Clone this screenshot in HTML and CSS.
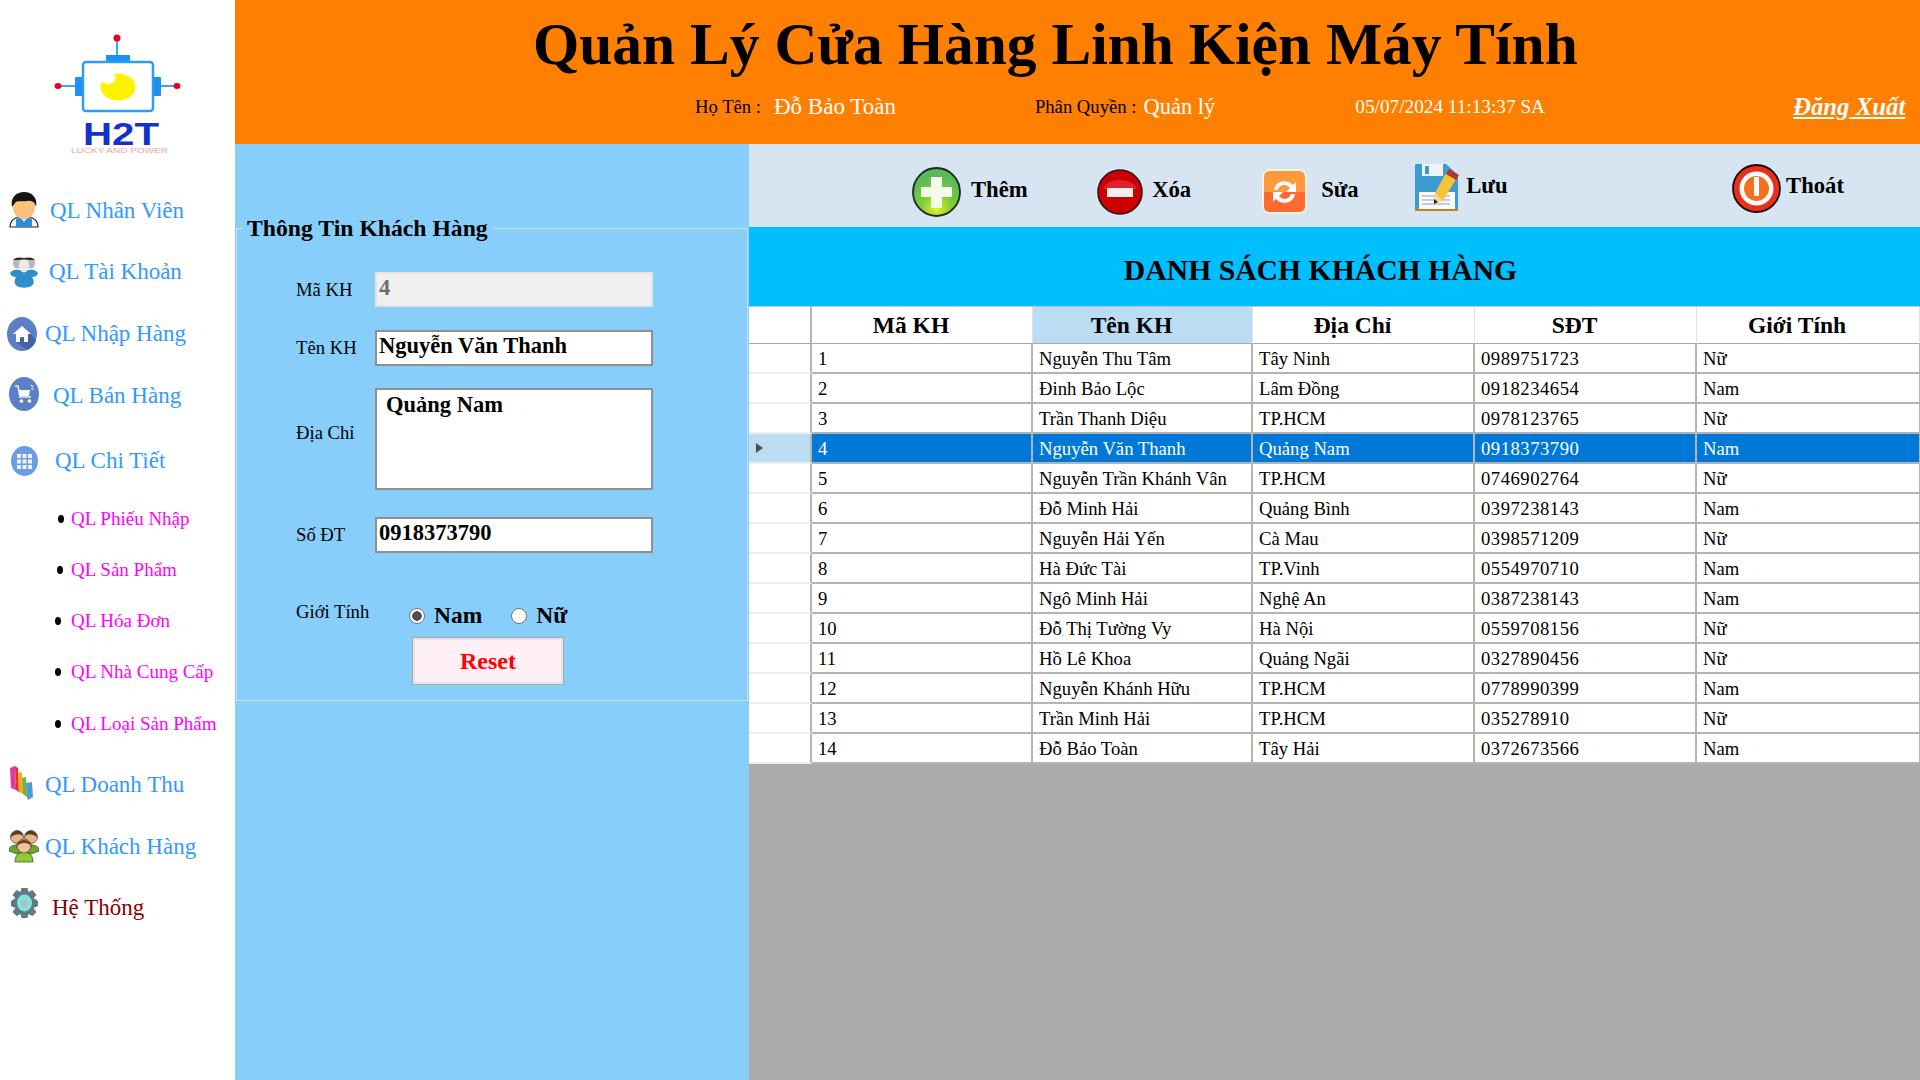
FILE: index.html
```html
<!DOCTYPE html>
<html lang="vi">
<head>
    <meta charset="UTF-8">
    <title>Quản Lý Cửa Hàng Linh Kiện Máy Tính</title>
    <link rel="stylesheet" href="styles.css">
</head>
<body>
<div class="app">
    <aside class="sidebar">
        <svg class="logo" width="235" height="165" viewBox="0 0 235 165">
            <path d="M117 38V56M58 86H76M160 86H177" stroke="#3ea6f0" stroke-width="2" fill="none"/>
            <circle cx="117" cy="38" r="3.5" fill="#e8001c"/>
            <ellipse cx="58" cy="86" rx="3.5" ry="3" fill="#e8001c"/>
            <ellipse cx="177" cy="86" rx="3.5" ry="3" fill="#e8001c"/>
            <rect x="106" y="55" width="24" height="7" fill="#1e90f0"/>
            <rect x="75" y="77" width="9" height="19" rx="1" fill="#1e90f0"/>
            <rect x="152" y="77" width="9" height="19" rx="1" fill="#1e90f0"/>
            <rect x="83" y="62" width="70" height="49" rx="3" fill="#fff" stroke="#2a9df4" stroke-width="2.5"/>
            <ellipse cx="118" cy="87" rx="17.5" ry="13.5" fill="#fff200"/>
            <ellipse cx="108" cy="78" rx="7.5" ry="6" fill="#fff"/>
            <text class="logo-name" x="83" y="145" textLength="76" lengthAdjust="spacingAndGlyphs">H2T</text>
            <text class="logo-tag" x="71" y="152.5" textLength="97" lengthAdjust="spacingAndGlyphs">LUCKY AND POWER</text>
        </svg>
        <nav class="nav">
            <a class="nav-link nav-staff" href="#">
                <svg width="30" height="36" viewBox="0 0 30 36">
                    <path d="M1 35C1 28 6 26 11 24H19C24 26 29 28 29 35Z" fill="#f4f4f4" stroke="#222" stroke-width="1.2"/>
                    <path d="M7 35V27L11 25L15 30L19 25L23 27V35Z" fill="#2a8fd8"/>
                    <ellipse cx="15" cy="15" rx="11" ry="12" fill="#fcc07c"/>
                    <path d="M3 15C1 5 8 0 15 0C23 0 29 6 27 15C26 10 23 8 18 9C13 10 8 8 6 11C5 12 4 14 3 15Z" fill="#141414"/>
                </svg>
                <span>QL Nhân Viên</span>
            </a>
            <a class="nav-link nav-account" href="#">
                <svg width="28" height="31" viewBox="0 0 28 31">
                    <path d="M0 16C2 13 5 12 9 13H19C23 12 26 13 28 16C27 19 25 20 22 20C25 24 24 29 19 30C15 31 10 31 7 29C4 27 4 23 6 20C3 20 1 19 0 16Z" fill="#2f8fcc"/>
                    <ellipse cx="7" cy="6" rx="4" ry="5.500" fill="#b9b9b9"/>
                    <ellipse cx="21" cy="6" rx="4" ry="5.500" fill="#b9b9b9"/>
                    <ellipse cx="14" cy="8" rx="5" ry="7.500" fill="#ececec"/>
                    <path d="M3 3C6 0 10 0 14 1C18 0 22 0 25 3C22 3 17 3 14 2.500C11 3 6 3 3 3Z" fill="#33291f"/>
                </svg>
                <span>QL Tài Khoản</span>
            </a>
            <a class="nav-link nav-import" href="#">
                <svg width="30" height="34" viewBox="0 0 30 34">
                    <ellipse cx="15" cy="17" rx="15" ry="17" fill="#5c80c6"/>
                    <path d="M9 25L20 33C25 31 28 27 29 23L22 15Z" fill="#46639f"/>
                    <path d="M15 9L24 17H21V25H17V20H13V25H9V17H6Z" fill="#fff"/>
                </svg>
                <span>QL Nhập Hàng</span>
            </a>
            <a class="nav-link nav-sale" href="#">
                <svg width="30" height="34" viewBox="0 0 30 34">
                    <ellipse cx="15" cy="17" rx="15" ry="17" fill="#5c80c6"/>
                    <path d="M6 9H9L11 20H22" fill="none" stroke="#e8eef8" stroke-width="1.6"/>
                    <path d="M10 13H21L20 19H11Z" fill="#fff"/>
                    <path d="M22 8L24 10M25 12H22" stroke="#e8eef8" stroke-width="1.200"/>
                    <circle cx="12.5" cy="24" r="1.8" fill="#fff"/>
                    <circle cx="20.5" cy="24" r="1.8" fill="#fff"/>
                </svg>
                <span>QL Bán Hàng</span>
            </a>
            <a class="nav-link nav-detail" href="#">
                <svg width="27" height="30" viewBox="0 0 27 30">
                    <ellipse cx="13.5" cy="15" rx="13.5" ry="15" fill="#6b9ce8"/>
                    <path d="M6 8h4v4H6zM11.500 8h4v4h-4zM17 8h4v4h-4zM6 13.500h4v4H6zM11.500 13.500h4v4h-4zM17 13.500h4v4h-4zM6 19h4v4H6zM11.500 19h4v4h-4zM17 19h4v4h-4z" fill="#f2f6fd"/>
                </svg>
                <span>QL Chi Tiết</span>
            </a>
            <ul class="subnav">
                <li class="sub-a"><a href="#">QL Phiếu Nhập</a></li>
                <li class="sub-b"><a href="#">QL Sản Phẩm</a></li>
                <li class="sub-c"><a href="#">QL Hóa Đơn</a></li>
                <li class="sub-c"><a href="#">QL Nhà Cung Cấp</a></li>
                <li class="sub-c"><a href="#">QL Loại Sản Phẩm</a></li>
            </ul>
            <a class="nav-link nav-revenue" href="#">
                <svg width="23" height="34" viewBox="0 0 23 34">
                    <path d="M0 2L5 0L6 24L1 22Z" fill="#e23a9c"/>
                    <path d="M5 0L8 2L9 26L6 24Z" fill="#e8302a"/>
                    <path d="M8 7L12 6L13 28L9 26Z" fill="#f8a81c"/>
                    <path d="M12 12L16 11L17 31L13 28Z" fill="#6cb83a"/>
                    <path d="M16 17L22 16L23 31L18 34L17 31Z" fill="#4f9ad0"/>
                </svg>
                <span>QL Doanh Thu</span>
            </a>
            <a class="nav-link nav-customer" href="#">
                <svg width="30" height="34" viewBox="0 0 30 34">
                    <path d="M0 22C0 17 4 16 8 16C12 16 15 18 15 23L8 25Z" fill="#6aa82c" stroke="#222" stroke-width=".6"/>
                    <path d="M30 22C30 17 26 16 22 16C18 16 15 18 15 23L22 25Z" fill="#6aa82c" stroke="#222" stroke-width=".6"/>
                    <circle cx="8" cy="8" r="6.500" fill="#e5b48a" stroke="#222" stroke-width=".6"/>
                    <circle cx="22" cy="8" r="6.500" fill="#e5b48a" stroke="#222" stroke-width=".6"/>
                    <path d="M2 8C2 1 13 -1 14 7C10 4 6 5 2 8ZM16 7C17 -1 28 1 28 8C24 5 20 4 16 7Z" fill="#5a3a1c"/>
                    <path d="M6 33C6 26 10 23 15 23C20 23 24 26 24 33Z" fill="#8ccc2c" stroke="#222" stroke-width=".6"/>
                    <circle cx="15" cy="17" r="7" fill="#f2c39a" stroke="#222" stroke-width=".6"/>
                    <path d="M8 17C8 9 22 9 22 17C19 13 12 13 8 17Z" fill="#6e4520"/>
                </svg>
                <span>QL Khách Hàng</span>
            </a>
            <a class="nav-link nav-system" href="#">
                <svg width="27" height="32" viewBox="0 0 27 32">
                    <path d="M10.500 1H16.500L17.500 5L21.500 3L25.500 8L22.500 11L27 14V19L22.500 21L25.500 25L21.500 29L17.500 27L16.500 31H10.500L9.500 27L5.500 29L1.500 25L4.500 21L0 19V14L4.500 11L1.500 8L5.500 3L9.500 5Z" fill="#5f7884"/>
                    <ellipse cx="13.500" cy="16" rx="7.500" ry="8.500" fill="#7fe6dc"/>
                    <ellipse cx="13.500" cy="16" rx="4" ry="4.500" fill="#a9c4c8"/>
                </svg>
                <span>Hệ Thống</span>
            </a>
        </nav>
    </aside>

    <div class="content">
        <header class="topbar">
            <h1>Quản Lý Cửa Hàng Linh Kiện Máy Tính</h1>
            <div class="userbar">
                <span class="user-label user-name">Họ Tên :</span>
                <span class="user-value user-name-value">Đỗ Bảo Toàn</span>
                <span class="user-label user-role">Phân Quyền :</span>
                <span class="user-value">Quản lý</span>
                <span class="user-date">05/07/2024 11:13:37 SA</span>
                <a class="logout" href="#">Đăng Xuất</a>
            </div>
        </header>

        <div class="workspace">
            <section class="panel">
                <fieldset class="info">
                    <legend>Thông Tin Khách Hàng</legend>
                    <div class="row row-id">
                        <label>Mã KH</label>
                        <input class="field field-off" type="text" value="4" disabled>
                    </div>
                    <div class="row row-name">
                        <label>Tên KH</label>
                        <input class="field" type="text" value="Nguyễn Văn Thanh">
                    </div>
                    <div class="row row-address">
                        <label>Địa Chỉ</label>
                        <textarea class="field field-area">Quảng Nam</textarea>
                    </div>
                    <div class="row row-phone">
                        <label>Số ĐT</label>
                        <input class="field" type="text" value="0918373790">
                    </div>
                    <div class="row row-gender">
                        <label>Giới Tính</label>
                        <label class="choice choice-m"><input type="radio" name="gt" checked>Nam</label>
                        <label class="choice"><input type="radio" name="gt">Nữ</label>
                    </div>
                    <button class="reset" type="button">Reset</button>
                </fieldset>
            </section>

            <main class="main">
                <div class="toolbar">
                    <button class="tool tool-add" type="button">
                        <svg width="49" height="50" viewBox="0 0 49 50">
                            <defs>
                                <radialGradient id="gAdd" cx="50%" cy="85%" r="70%">
                                    <stop offset="0" stop-color="#e6f02a"/>
                                    <stop offset=".45" stop-color="#7ccf34"/>
                                    <stop offset="1" stop-color="#5cb85c"/>
                                </radialGradient>
                            </defs>
                            <ellipse cx="24.500" cy="25" rx="23.500" ry="24" fill="url(#gAdd)" stroke="#1c2a1c" stroke-width="1.800"/>
                            <path d="M19 10H30V20H40V30H30V41H19V30H9V20H19Z" fill="#f4fbe8"/>
                        </svg>
                        <span>Thêm</span>
                    </button>
                    <button class="tool tool-del" type="button">
                        <svg width="46" height="46" viewBox="0 0 46 46">
                            <circle cx="23" cy="23" r="22" fill="#cc0000" stroke="#2a0a0a" stroke-width="1.500"/>
                            <path d="M6 20C10 8 36 8 40 20Z" fill="#e0202a"/>
                            <rect x="10" y="19" width="26" height="9" fill="#f6eeee"/>
                        </svg>
                        <span>Xóa</span>
                    </button>
                    <button class="tool tool-edit" type="button">
                        <svg width="47" height="47" viewBox="0 0 47 47">
                            <rect x="1" y="1" width="45" height="45" rx="8" fill="#fdf0e4"/>
                            <path d="M3 9Q3 3 9 3H38Q44 3 44 9V24H3Z" fill="#ff9a3c"/>
                            <path d="M3 24H44V38Q44 44 38 44H9Q3 44 3 38Z" fill="#ff6a30"/>
                            <path d="M13 22C14 13 26 10 32 17L35 14V24H25L29 20C25 15 18 17 17 22ZM34 26C33 35 21 38 15 31L12 34V24H22L18 28C22 33 29 31 30 26Z" fill="#fff"/>
                        </svg>
                        <span>Sửa</span>
                    </button>
                    <button class="tool tool-save" type="button">
                        <svg width="49" height="50" viewBox="0 0 49 50">
                            <path d="M4 1H34L46 12V47H3V2Z" fill="#3d9ccf"/>
                            <rect x="10" y="1" width="21" height="12" fill="#f2f4f4"/>
                            <rect x="13" y="3" width="4" height="8" fill="#3d9ccf"/>
                            <rect x="7" y="29" width="36" height="17" fill="#fbfbf8"/>
                            <path d="M10 33H38M10 37H38M10 41H38" stroke="#9a92d8" stroke-width="1"/>
                            <path d="M3 47H46" stroke="#c97a1a" stroke-width="2"/>
                            <path d="M34 10L44 16L31 38L22 40L23 30Z" fill="#f6c435"/>
                            <path d="M37 6L47 12L44 17L34 11Z" fill="#b8323a"/>
                            <path d="M23 30L31 38L23 41Z" fill="#f3d7b0"/>
                            <path d="M22 36L26 39L22 41Z" fill="#222"/>
                        </svg>
                        <span>Lưu</span>
                    </button>
                    <button class="tool tool-exit" type="button">
                        <svg width="49" height="49" viewBox="0 0 49 49">
                            <circle cx="24.500" cy="24.500" r="23.500" fill="#e8301c" stroke="#1a0a05" stroke-width="1.800"/>
                            <circle cx="24.500" cy="24.500" r="17" fill="#fff"/>
                            <circle cx="24.500" cy="24.500" r="12.500" fill="#f8701a"/>
                            <rect x="22" y="13" width="5" height="19" fill="#fff"/>
                        </svg>
                        <span>Thoát</span>
                    </button>
                </div>
                <h2 class="list-title">DANH SÁCH KHÁCH HÀNG</h2>
                <div class="grid-area">
                    <table class="grid">
                        <colgroup>
                            <col class="col-head">
                            <col class="col-id">
                            <col class="col-name">
                            <col class="col-addr">
                            <col class="col-phone">
                            <col class="col-sex">
                        </colgroup>
                        <thead>
                            <tr>
                                <th></th>
                                <th>Mã KH</th>
                                <th class="th-active">Tên KH</th>
                                <th>Địa Chỉ</th>
                                <th>SĐT</th>
                                <th>Giới Tính</th>
                            </tr>
                        </thead>
                        <tbody>
                            <tr><th></th><td>1</td><td>Nguyễn Thu Tâm</td><td>Tây Ninh</td><td>0989751723</td><td>Nữ</td></tr>
                            <tr><th></th><td>2</td><td>Đinh Bảo Lộc</td><td>Lâm Đồng</td><td>0918234654</td><td>Nam</td></tr>
                            <tr><th></th><td>3</td><td>Trần Thanh Diệu</td><td>TP.HCM</td><td>0978123765</td><td>Nữ</td></tr>
                            <tr class="selected"><th><span class="arrow"></span></th><td>4</td><td>Nguyễn Văn Thanh</td><td>Quảng Nam</td><td>0918373790</td><td>Nam</td></tr>
                            <tr><th></th><td>5</td><td>Nguyễn Trần Khánh Vân</td><td>TP.HCM</td><td>0746902764</td><td>Nữ</td></tr>
                            <tr><th></th><td>6</td><td>Đỗ Minh Hải</td><td>Quảng Bình</td><td>0397238143</td><td>Nam</td></tr>
                            <tr><th></th><td>7</td><td>Nguyễn Hải Yến</td><td>Cà Mau</td><td>0398571209</td><td>Nữ</td></tr>
                            <tr><th></th><td>8</td><td>Hà Đức Tài</td><td>TP.Vinh</td><td>0554970710</td><td>Nam</td></tr>
                            <tr><th></th><td>9</td><td>Ngô Minh Hải</td><td>Nghệ An</td><td>0387238143</td><td>Nam</td></tr>
                            <tr><th></th><td>10</td><td>Đỗ Thị Tường Vy</td><td>Hà Nội</td><td>0559708156</td><td>Nữ</td></tr>
                            <tr><th></th><td>11</td><td>Hồ Lê Khoa</td><td>Quảng Ngãi</td><td>0327890456</td><td>Nữ</td></tr>
                            <tr><th></th><td>12</td><td>Nguyễn Khánh Hữu</td><td>TP.HCM</td><td>0778990399</td><td>Nam</td></tr>
                            <tr><th></th><td>13</td><td>Trần Minh Hải</td><td>TP.HCM</td><td>035278910</td><td>Nữ</td></tr>
                            <tr><th></th><td>14</td><td>Đỗ Bảo Toàn</td><td>Tây Hải</td><td>0372673566</td><td>Nam</td></tr>
                        </tbody>
                    </table>
                </div>
            </main>
        </div>
    </div>
</div>
</body>
</html>
```

FILE: styles.css
```css
* {
    box-sizing: border-box;
}
html, body {
    height: 100%;
}
body {
    margin: 0;
    overflow: hidden;
    background-color: #ffffff;
    color: #000000;
    font-family: "Liberation Serif", "Times New Roman", serif;
}
a {
    text-decoration: none;
}
.app {
    display: grid;
    grid-template-columns: 235px 1fr;
    height: 1080px;
}

/* sidebar */
.logo {
    display: block;
}
.logo-name {
    font-family: "Liberation Sans", Arial, sans-serif;
    font-weight: 700;
    font-size: 31px;
    fill: #1232cc;
}
.logo-tag {
    font-family: "Liberation Sans", Arial, sans-serif;
    font-size: 8px;
    fill: #f2a0a8;
}
.nav {
    margin-top: 14px;
}
.nav-link {
    display: flex;
    align-items: center;
    height: 62px;
    font-size: 23px;
    color: #3399ff;
}
.nav-staff {
    padding-left: 9px;
}
.nav-staff span {
    margin: 2px 0 0 11px;
}
.nav-account {
    padding-left: 10px;
}
.nav-account span {
    margin-left: 11px;
}
.nav-import {
    padding-left: 7px;
}
.nav-import span {
    margin-left: 8px;
}
.nav-sale {
    padding-left: 9px;
}
.nav-sale svg {
    margin-bottom: 4px;
}
.nav-sale span {
    margin-left: 14px;
}
.nav-detail {
    margin-top: 3px;
    padding-left: 11px;
}
.nav-detail span {
    margin-left: 17px;
}
.subnav {
    margin: 1px 0 0;
    padding: 0;
    list-style: none;
    font-size: 19px;
}
.subnav li {
    display: flex;
    align-items: center;
    height: 51.25px;
}
.subnav li::before {
    content: "";
    width: 6px;
    height: 8px;
    margin-right: 7px;
    border-radius: 50%;
    background-color: #000000;
}
.subnav a {
    color: #ff00ff;
}
.sub-a {
    padding-left: 58px;
}
.sub-b {
    padding-left: 57px;
}
.sub-b::before {
    margin-right: 8px !important;
}
.sub-c {
    padding-left: 55px;
}
.sub-c::before {
    margin-right: 10px !important;
}
.nav-revenue {
    margin-top: 5px;
    padding-left: 10px;
}
.nav-revenue svg {
    margin-bottom: 4px;
}
.nav-revenue span {
    margin-left: 12px;
}
.nav-customer {
    padding-left: 9px;
}
.nav-customer svg {
    margin-bottom: 2px;
}
.nav-customer span {
    margin-left: 6px;
}
.nav-system {
    margin-top: -1px;
    padding-left: 11px;
}
.nav-system svg {
    margin-bottom: 10px;
}
.nav-system span {
    margin-left: 14px;
    color: #8b0000;
}

/* header */
.content {
    display: flex;
    flex-direction: column;
    min-width: 0;
}
.topbar {
    height: 144px;
    background-color: #ff8000;
}
.topbar h1 {
    margin: 0;
    padding: 10px 0 0 298px;
    font-size: 59.5px;
    line-height: 68px;
    white-space: nowrap;
}
.userbar {
    display: flex;
    align-items: center;
    height: 30px;
    margin-top: 14px;
    padding-left: 460px;
    white-space: nowrap;
}
.user-label {
    font-size: 18.67px;
}
.user-value {
    margin-left: 13px;
    font-size: 23px;
    color: #ffffff;
}
.user-name-value {
    margin-right: 139px;
}
.user-role + .user-value {
    margin-left: 7px;
    font-size: 22.5px;
}
.user-date {
    margin-left: 140px;
    font-size: 19.25px;
    color: #ffffff;
}
.logout {
    margin-left: 248px;
    font-size: 24.8px;
    font-weight: 700;
    font-style: italic;
    color: #ffffff;
    text-decoration: underline;
}

/* customer form */
.workspace {
    display: flex;
    flex: 1;
    min-height: 0;
}
.panel {
    width: 514px;
    padding: 73px 1px 0;
    background-color: #87cefa;
}
.info {
    height: 484px;
    margin: 0;
    padding: 0 0 0 59px;
    border: 1px solid #cfdde8;
    min-width: 0;
}
.info legend {
    margin-left: -54px;
    padding: 0 5px;
    font-size: 23.7px;
    font-weight: 700;
    line-height: 22px;
    white-space: nowrap;
}
.row {
    display: flex;
    align-items: center;
}
.row > label:first-child {
    width: 79px;
    font-size: 18.67px;
}
.row-id {
    margin-top: 33px;
}
.row-name {
    margin-top: 23px;
}
.row-address {
    margin-top: 22px;
}
.row-address > label:first-child {
    margin-bottom: 12px;
}
.row-phone {
    margin-top: 27px;
}
.row-gender {
    margin-top: 48px;
}
.row-gender > label:first-child {
    margin-bottom: 7px;
}
.field {
    width: 278px;
    height: 36px;
    margin: 0;
    padding: 0 0 4px 2px;
    border: 2px solid #8f8f8f;
    background-color: #ffffff;
    color: #000000;
    font-family: inherit;
    font-size: 22.5px;
    font-weight: 700;
}
.field-off {
    height: 35px;
    border-color: #e3e3e3;
    background-color: #f0f0f0;
    color: #6d6d6d;
    opacity: 1;
}
.field-area {
    display: block;
    height: 102px;
    padding: 2px 9px;
    resize: none;
}
.choice {
    display: flex;
    align-items: center;
    font-size: 23.5px;
    font-weight: 700;
}
.choice-m {
    margin: 0 29px 0 34px;
}
.choice input {
    appearance: none;
    width: 16px;
    height: 16px;
    margin: 0 9px 0 0;
    border: 1px solid #767676;
    border-radius: 50%;
    background-color: #ffffff;
}
.choice input:checked {
    background-image: radial-gradient(circle, #4d4d4d 0 4.5px, #ffffff 5px);
}
.reset {
    display: block;
    width: 152px;
    height: 48px;
    margin: 7px 0 0 116px;
    border: 1px solid #a9a9a9;
    box-shadow: inset 0 0 0 2px #e4e4e4;
    background-color: #fff0f5;
    color: #ff0000;
    font-family: inherit;
    font-size: 24px;
    font-weight: 700;
}

/* toolbar and list */
.main {
    flex: 1;
    display: flex;
    flex-direction: column;
    min-width: 0;
    background-color: #ababab;
}
.toolbar {
    display: flex;
    height: 83px;
    background-color: #d7e4f2;
}
.tool {
    display: flex;
    align-items: center;
    height: 50px;
    padding: 0;
    border: 0;
    background: none;
    color: #000000;
    font-family: inherit;
    font-size: 22.67px;
    font-weight: 700;
}
.tool svg {
    display: block;
    flex: none;
}
.tool-add {
    margin: 23px 0 0 163px;
}
.tool-add span {
    margin: 0 0 4px 10px;
}
.tool-del {
    margin: 23px 0 0 69.5px;
}
.tool-del span {
    margin: 0 0 4px 9px;
}
.tool-edit {
    margin: 22px 0 0 70px;
}
.tool-edit span {
    margin: 0 0 2px 13px;
}
.tool-save {
    margin: 19px 0 0 53.5px;
}
.tool-save span {
    margin: 0 0 4px 5px;
}
.tool-exit {
    margin: 19px 0 0 224.5px;
}
.tool-exit span {
    margin: 0 0 4px 5px;
}
.list-title {
    height: 80px;
    margin: 0;
    padding-right: 28px;
    border-bottom: 1px solid #b7c9d6;
    background-color: #00bfff;
    font-size: 29.7px;
    line-height: 86px;
    text-align: center;
}
.grid {
    width: 100%;
    border-collapse: separate;
    border-spacing: 0;
    table-layout: fixed;
    background-color: #ffffff;
}
.col-head {
    width: 63px;
}
.col-id {
    width: 221px;
}
.col-name {
    width: 220px;
}
.col-addr {
    width: 222px;
}
.col-phone {
    width: 222px;
}
.grid thead th {
    height: 37px;
    padding: 0 22px 0 0;
    border-right: 1px solid #e2e2e2;
    border-bottom: 1px solid #a8a8a8;
    font-size: 23.5px;
    font-weight: 700;
}
.grid thead th:first-child {
    border-right: 2px solid #b4b4b4;
}
.grid .th-active {
    background-color: #bcdcf4;
}
.grid tbody th {
    height: 30px;
    padding: 0;
    border-right: 2px solid #b4b4b4;
    border-bottom: 2px solid #efefef;
    background-color: #ffffff;
}
.grid td {
    height: 30px;
    padding: 2px 0 0 6px;
    border-right: 2px solid #b4b4b4;
    border-bottom: 2px solid #b4b4b4;
    font-size: 18.67px;
    white-space: nowrap;
}
.grid td:nth-child(5) {
    letter-spacing: 0.5px;
}
.grid tr td:last-child {
    border-right: 1px solid #b4b4b4;
}
.selected td {
    background-color: #0078d7;
    color: #ffffff;
}
.grid .selected th {
    background-color: #bcdcf4;
    text-align: left;
}
.arrow {
    display: block;
    width: 0;
    height: 0;
    margin-left: 7px;
    border-top: 5.5px solid transparent;
    border-bottom: 5.5px solid transparent;
    border-left: 7px solid #505050;
}
```
